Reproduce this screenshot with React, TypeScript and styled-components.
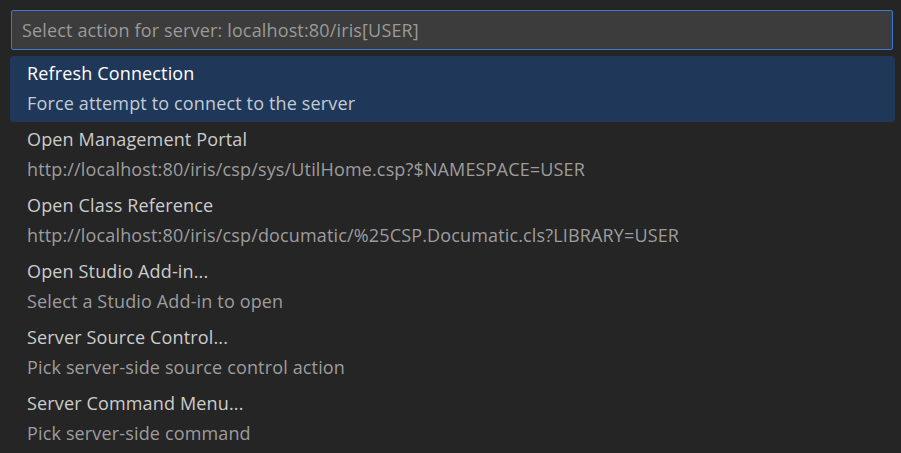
import React from 'react';
import styled, { createGlobalStyle } from 'styled-components';

interface Action {
    label: string;
    detail: string;
}

const ACTIONS: Action[] = [
    { label: 'Refresh Connection', detail: 'Force attempt to connect to the server' },
    { label: 'Open Management Portal', detail: 'http://localhost:80/iris/csp/sys/UtilHome.csp?$NAMESPACE=USER' },
    { label: 'Open Class Reference', detail: 'http://localhost:80/iris/csp/documatic/%25CSP.Documatic.cls?LIBRARY=USER' },
    { label: 'Open Studio Add-in...', detail: 'Select a Studio Add-in to open' },
    { label: 'Server Source Control...', detail: 'Pick server-side source control action' },
    { label: 'Server Command Menu...', detail: 'Pick server-side command' },
];

const GlobalStyle = createGlobalStyle`
    html, body {
        margin: 0;
        padding: 0;
        background: #252526;
        overflow: hidden;
    }
`;

const App: React.FC = () => {
    const selected = 0;

    return <>
        <GlobalStyle />
        <QuickPick>
            <InputBox>
                <Placeholder>Select action for server: localhost:80/iris[USER]</Placeholder>
            </InputBox>
            <ActionList>
                {
                    ACTIONS.map((action, i) => (
                        <ActionItem key={action.label} $active={i === selected}>
                            <ActionLabel $active={i === selected}>{action.label}</ActionLabel>
                            <ActionDetail $active={i === selected}>{action.detail}</ActionDetail>
                        </ActionItem>
                    ))
                }
            </ActionList>
        </QuickPick>
    </>;
};

const QuickPick = styled.div`
    width: 901px;
    height: 453px;
    box-sizing: border-box;
    padding: 10px 6px 0 10px;
    background: #252526;
    font-family: "Open Sans", "Noto Sans", sans-serif;
    font-size: 18px;
    letter-spacing: 0.15px;
    display: flex;
    flex-direction: column;
    gap: 6px;
`;

const InputBox = styled.div`
    height: 40px;
    margin: 0 2px 0 1px;
    box-sizing: border-box;
    border: 1px solid #3b78d3;
    border-radius: 2px;
    background: #3c3c3c;
    display: flex;
    align-items: center;
    padding: 0 10px;
`;

const Placeholder = styled.span`
    color: #9a9a9a;
    white-space: nowrap;
`;

const ActionList = styled.ul`
    list-style: none;
    margin: 0;
    padding: 0;
    display: flex;
    flex-direction: column;
`;

const ActionItem = styled.li<{ $active: boolean }>`
    height: 66px;
    box-sizing: border-box;
    padding: 2px 17px 4px;
    border-radius: 4px;
    background: ${p => p.$active ? '#1f3859' : 'transparent'};
    display: flex;
    flex-direction: column;
`;

const ActionLabel = styled.div<{ $active: boolean }>`
    line-height: 30px;
    color: ${p => p.$active ? '#ffffff' : '#cccccc'};
    white-space: nowrap;
`;

const ActionDetail = styled.div<{ $active: boolean }>`
    line-height: 30px;
    color: ${p => p.$active ? '#c3cbd6' : '#9d9d9d'};
    white-space: nowrap;
`;

export default App;
